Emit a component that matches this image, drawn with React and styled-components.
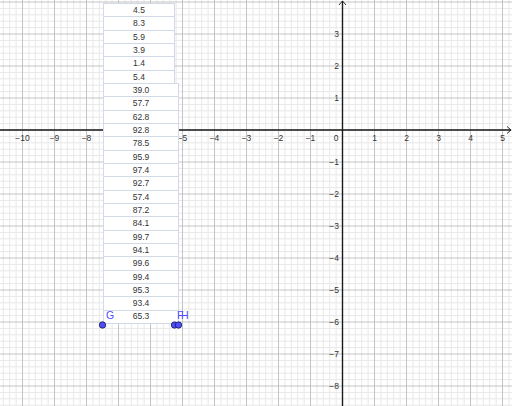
import React from "react";
import styled, { createGlobalStyle } from "styled-components";

const Global = createGlobalStyle`
  html, body { margin: 0; padding: 0; background: #ffffff; }
  body { font-family: "Liberation Sans", Arial, sans-serif; }
`;

const Stage = styled.div`
  position: relative;
  width: 512px;
  height: 406px;
  overflow: hidden;
  background: #ffffff;
`;

const Graph = styled.svg`
  display: block;
  width: 512px;
  height: 406px;
`;

const Overlay = styled.svg`
  position: absolute;
  left: 0;
  top: 0;
  width: 512px;
  height: 406px;
  pointer-events: none;
`;

const ListBox = styled.div`
  position: absolute;
  left: ${(p) => p.$left}px;
  top: ${(p) => p.$top}px;
  width: ${(p) => p.$width}px;
  display: flex;
  flex-direction: column;
  background: #ffffff;
  border-left: 1px solid #d3d9e6;
  border-right: 1px solid #d3d9e6;
  border-top: 1px solid #d3d9e6;
  box-sizing: border-box;
`;

const Cell = styled.div`
  height: 13.333px;
  box-sizing: border-box;
  border-bottom: 1px solid #d3d9e6;
  display: flex;
  align-items: center;
  justify-content: center;
  font-family: "Liberation Sans", Arial, sans-serif;
  font-size: 8.5px;
  color: #333333;
  line-height: 1;
`;

const OX = 342.5;
const OY = 130;
const U = 32;

const listA = ["4.5", "8.3", "5.9", "3.9", "1.4", "5.4"];
const listB = [
  "39.0", "57.7", "62.8", "92.8", "78.5", "95.9", "97.4", "92.7", "57.4",
  "87.2", "84.1", "99.7", "94.1", "99.6", "99.4", "95.3", "93.4", "65.3",
];

function Grid() {
  const minorV = [];
  const majorV = [];
  for (let i = -60; i <= 30; i++) {
    const x = OX + i * (U / 5);
    if (x < 0 || x > 512) continue;
    if (i % 5 === 0) majorV.push(x);
    else minorV.push(x);
  }
  const minorH = [];
  const majorH = [];
  for (let i = -25; i <= 50; i++) {
    const y = OY + i * (U / 5);
    if (y < 0 || y > 406) continue;
    if (i % 5 === 0) majorH.push(y);
    else minorH.push(y);
  }
  // -6 and -7 lie under the list boxes and are not visible
  const xLabels = [];
  for (let k = -10; k <= 5; k++) if (k !== 0 && k !== -6 && k !== -7) xLabels.push(k);
  const yLabels = [];
  for (let k = 3; k >= -8; k--) if (k !== 0) yLabels.push(k);
  const fmt = (k) => (k < 0 ? "\u2212" + Math.abs(k) : String(k));

  return (
    <Graph viewBox="0 0 512 406">
      <g stroke="#e8e8e8" strokeWidth="1">
        {minorV.map((x) => (
          <line key={"mv" + x} x1={x} y1={0} x2={x} y2={406} />
        ))}
        {minorH.map((y) => (
          <line key={"mh" + y} x1={0} y1={y} x2={512} y2={y} />
        ))}
      </g>
      <g stroke="#c4c4c4" strokeWidth="1">
        {majorV.map((x) => (
          <line key={"Mv" + x} x1={x} y1={0} x2={x} y2={406} />
        ))}
        {majorH.map((y) => (
          <line key={"Mh" + y} x1={0} y1={y} x2={512} y2={y} />
        ))}
      </g>
      <g stroke="#1a1a1a" strokeWidth="1.4" fill="none">
        <line x1={0} y1={OY} x2={511} y2={OY} />
        <line x1={OX} y1={1} x2={OX} y2={406} />
        <polyline points={`${507},${OY - 3.5} ${511},${OY} ${507},${OY + 3.5}`} strokeWidth="0.9" />
        <polyline points={`${OX - 3.5},${5} ${OX},${1} ${OX + 3.5},${5}`} strokeWidth="0.9" />
      </g>
      <g fontFamily="'Liberation Sans', Arial, sans-serif" fontSize="8.5" fill="#333333">
        {xLabels.map((k) => (
          <text key={"xl" + k} x={OX + k * U} y={OY + 10.5} textAnchor="middle">
            {fmt(k)}
          </text>
        ))}
        {yLabels.map((k) => (
          <text key={"yl" + k} x={OX - 3.5} y={OY - k * U + 3} textAnchor="end">
            {fmt(k)}
          </text>
        ))}
        <text x={OX - 4} y={OY + 10.5} textAnchor="end">0</text>
      </g>
    </Graph>
  );
}

function Points() {
  return (
    <Overlay viewBox="0 0 512 406">
      <g fill="#4d4dff" stroke="#1a1a4d" strokeWidth="0.8">
        <circle cx={102.5} cy={325} r={3.2} />
        <circle cx={174.5} cy={325} r={3.2} />
        <circle cx={178.5} cy={325} r={3.2} />
      </g>
      <g fontFamily="'Liberation Sans', Arial, sans-serif" fontSize="10.5" fill="#4d4dff">
        <text x={106} y={319}>G</text>
        <text x={177} y={319} letterSpacing="-2.5">FH</text>
      </g>
    </Overlay>
  );
}

export default function App() {
  return (
    <>
      <Global />
      <Stage>
        <Grid />
        <ListBox $left={103} $top={3} $width={72}>
          {listA.map((v, i) => (
            <Cell key={"a" + i}>{v}</Cell>
          ))}
        </ListBox>
        <ListBox $left={103} $top={83} $width={76}>
          {listB.map((v, i) => (
            <Cell key={"b" + i}>{v}</Cell>
          ))}
        </ListBox>
        <Points />
      </Stage>
    </>
  );
}
